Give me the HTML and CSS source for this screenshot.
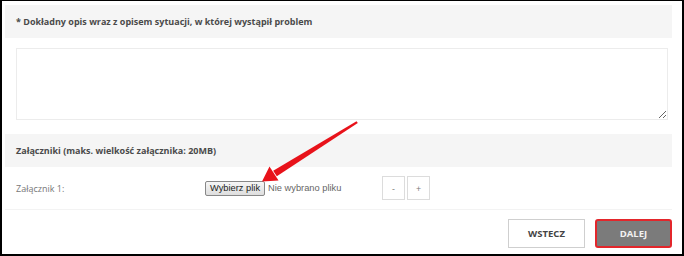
FILE: index.html
```html
<!DOCTYPE html>
<html lang="pl">
<head>
    <meta charset="UTF-8">
    <title>Zgłoszenie problemu</title>
    <link rel="stylesheet" href="styles.css">
</head>
<body>

    <div class="frame">
        <div class="section-title">* Dokładny opis wraz z opisem sytuacji, w której wystąpił problem</div>

        <div class="field">
            <textarea class="description"></textarea>
        </div>

        <div class="section-title">Załączniki (maks. wielkość załącznika: 20MB)</div>

        <div class="attach-row">
            <div class="attach-label">Załącznik 1:</div>
            <div class="file-input">
                <span class="file-btn">Wybierz plik</span>
                <span class="file-name">Nie wybrano pliku</span>
            </div>
            <div class="count-buttons">
                <button class="small-btn">-</button>
                <button class="small-btn">+</button>
            </div>
        </div>

        <div class="actions">
            <button class="button back">WSTECZ</button>
            <button class="button next">DALEJ</button>
        </div>

        <!-- Annotation arrow pointing at the file button -->
        <svg class="arrow" width="684" height="256" viewBox="0 0 684 256">
            <polygon points="356.5,121.2 357.8,123.0 276.8,176.2 273.2,170.8" fill="#e8121a"/>
            <polygon points="262,181.5 269.5,166.5 278.5,180.5" fill="#e8121a"/>
        </svg>
    </div>

</body>
</html>
```

FILE: styles.css
```css
body {
    margin: 0;
    font-family: 'Open Sans', sans-serif;
    background: #fff;
}

.frame {
    position: relative;
    box-sizing: border-box;
    width: 684px;
    height: 256px;
    border-style: solid;
    border-color: #000;
    border-width: 1px 2px 2px 2px;
    padding: 4px 10px 0 3px;
    overflow: hidden;
}

.section-title {
    height: 33px;
    line-height: 33px;
    padding-left: 11px;
    background-color: #f5f5f5;
    color: #4a4a4a;
    font-size: 9px;
    font-weight: bold;
}

.field {
    padding: 10px 4px 14px 11px;
}

.description {
    display: block;
    box-sizing: border-box;
    width: 100%;
    height: 72px;
    margin: 0;
    border: 1px solid #ececec;
    resize: vertical;
    outline: none;
}

.attach-row {
    display: flex;
    align-items: center;
    height: 42px;
    padding-left: 11px;
    border-bottom: 1px solid #f3f3f3;
}

.attach-label {
    width: 189px;
    color: #777;
    font-size: 9px;
}

.file-input {
    display: flex;
    align-items: center;
    width: 177px;
    font-family: 'Liberation Sans', Arial, sans-serif;
    font-size: 9.3px;
}

.file-btn {
    box-sizing: border-box;
    height: 15px;
    line-height: 13px;
    padding: 0 4px;
    border: 1px solid #888;
    border-radius: 2px;
    background: linear-gradient(#f6f6f6, #dedede);
    color: #222;
}

.file-name {
    margin-left: 3px;
    color: #666;
}

.count-buttons {
    display: flex;
    gap: 2px;
}

.small-btn {
    box-sizing: border-box;
    width: 23px;
    height: 24px;
    padding: 0;
    border: 1px solid #dcdcdc;
    background: #fff;
    color: #777;
    font-family: 'Open Sans', sans-serif;
    font-size: 9px;
}

.actions {
    display: flex;
    justify-content: flex-end;
    gap: 10px;
    padding-top: 9px;
}

.button {
    box-sizing: border-box;
    width: 77px;
    height: 29px;
    padding: 0;
    font-family: 'Open Sans', sans-serif;
    font-size: 9.5px;
    font-weight: bold;
    cursor: pointer;
}

.back {
    background: #fff;
    border: 1px solid #cfcfcf;
    color: #444;
}

.next {
    background: #7b7b7b;
    border: 2px solid #e3262b;
    border-radius: 3px;
    color: #f2f2f2;
}

.arrow {
    position: absolute;
    top: -1px;
    left: -2px;
    pointer-events: none;
}
```
